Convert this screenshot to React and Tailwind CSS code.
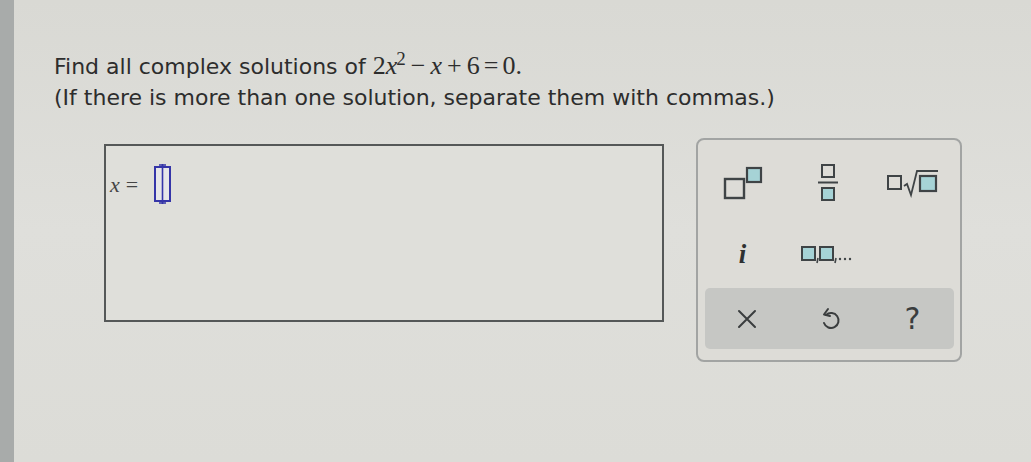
import React from "react";

const teal = "#a6d3d6";
const dark = "#3f4446";

function SupIcon() {
  return (
    <svg width="42" height="34" viewBox="0 0 42 34">
      <rect x="3" y="13" width="19" height="19" fill="none" stroke={dark} strokeWidth="2.4" />
      <rect x="25" y="2" width="14" height="14" fill={teal} stroke={dark} strokeWidth="2.2" />
    </svg>
  );
}

function FracIcon() {
  return (
    <svg width="26" height="40" viewBox="0 0 26 40">
      <rect x="7" y="2" width="12" height="12" fill="none" stroke={dark} strokeWidth="2" />
      <line x1="3" y1="19.5" x2="23" y2="19.5" stroke={dark} strokeWidth="2" />
      <rect x="7" y="25" width="12" height="12" fill={teal} stroke={dark} strokeWidth="2" />
    </svg>
  );
}

function SqrtIcon() {
  return (
    <svg width="54" height="30" viewBox="0 0 54 30">
      <rect x="2" y="8" width="13" height="13" fill="none" stroke={dark} strokeWidth="2" />
      <path d="M18 18 L21 16 L25 27 L31 3 L52 3" fill="none" stroke={dark} strokeWidth="1.8" />
      <rect x="34" y="8" width="16" height="15" fill={teal} stroke={dark} strokeWidth="2.2" />
    </svg>
  );
}

function ListIcon() {
  return (
    <svg width="56" height="22" viewBox="0 0 56 22">
      <rect x="2" y="4" width="13" height="13" fill={teal} stroke={dark} strokeWidth="2" />
      <path d="M18 15 L17 20" stroke={dark} strokeWidth="1.6" />
      <rect x="20" y="4" width="13" height="13" fill={teal} stroke={dark} strokeWidth="2" />
      <path d="M36 15 L35 20" stroke={dark} strokeWidth="1.6" />
      <circle cx="40" cy="16" r="1.2" fill={dark} />
      <circle cx="45" cy="16" r="1.2" fill={dark} />
      <circle cx="50" cy="16" r="1.2" fill={dark} />
    </svg>
  );
}

function XIcon() {
  return (
    <svg width="22" height="22" viewBox="0 0 22 22">
      <path d="M3 3 L19 19 M19 3 L3 19" stroke="#3a3d3e" strokeWidth="2" strokeLinecap="round" />
    </svg>
  );
}

function UndoIcon() {
  return (
    <svg width="22" height="24" viewBox="0 0 22 24">
      <path d="M7 8 A7.5 7.5 0 1 1 5 16" fill="none" stroke="#3a3d3e" strokeWidth="2" strokeLinecap="round" />
      <path d="M9 2 L5 7.5 L11 9" fill="none" stroke="#3a3d3e" strokeWidth="2" strokeLinecap="round" strokeLinejoin="round" />
    </svg>
  );
}

function Placeholder() {
  return (
    <svg width="22" height="42" viewBox="0 0 22 42">
      <rect x="3" y="4" width="15" height="34" fill="#e6e6e8" stroke="#3535a8" strokeWidth="2" />
      <line x1="10.5" y1="1" x2="10.5" y2="41" stroke="#3535a8" strokeWidth="1.6" />
      <path d="M7 2 L14 2 M7 40 L14 40" stroke="#3535a8" strokeWidth="1.4" />
    </svg>
  );
}

export default function App() {
  const sans = { fontFamily: "'DejaVu Sans', Verdana, sans-serif" };
  const serif = { fontFamily: "'Liberation Serif', 'Times New Roman', serif" };
  return (
    <div className="w-[1031px] h-[462px] flex overflow-hidden bg-[#dcdcd7]">
      <div className="w-[14px] shrink-0 bg-[#a8abaa]" />
      <div className="flex-1 bg-gradient-to-b from-[#d9d9d4] via-[#dfdfdb] to-[#dcdcd7] pl-[40px] pt-[50px]">
        <div className="text-[22px] leading-[31px] text-[#2d2d2d]" style={sans}>
          <p>
            Find all complex solutions of{" "}
            <span className="text-[26px]" style={serif}>
              2<i>x</i>
              <sup className="text-[19px] -ml-[1px]">2</sup>
              <span className="ml-[5px] mr-[5px]">−</span>
              <i>x</i>
              <span className="mx-[5px]">+</span>6<span className="mx-[4px]">=</span>0.
            </span>
          </p>
          <p>(If there is more than one solution, separate them with commas.)</p>
        </div>
        <div className="flex items-start mt-[25px]">
          <div className="ml-[50px] mt-[6px] w-[560px] h-[178px] border-2 border-[#555858] bg-[#dfdfda] flex items-start pt-[17px] pl-[4px]">
            <span className="text-[22px] text-[#444] italic mt-[5px]" style={serif}>x</span>
            <span className="text-[22px] text-[#444] ml-[6px] mt-[5px]" style={serif}>=</span>
            <span className="ml-[14px]">
              <Placeholder />
            </span>
          </div>
          <div className="ml-[32px] w-[266px] h-[224px] border-2 border-[#a2a4a3] rounded-[8px] bg-[#dddcd7] flex flex-col pl-[2px]">
            <div className="grid grid-cols-[85px_85px_85px] h-[80px] items-center justify-items-center pt-[6px]">
              <SupIcon />
              <FracIcon />
              <SqrtIcon />
            </div>
            <div className="grid grid-cols-[85px_85px_85px] h-[68px] items-center justify-items-center">
              <span className="text-[27px] italic font-bold text-[#2e3132]" style={serif}>i</span>
              <ListIcon />
              <span />
            </div>
            <div className="ml-[5px] w-[249px] h-[61px] rounded-[5px] bg-[#c6c7c4] grid grid-cols-3 items-center justify-items-center">
              <XIcon />
              <UndoIcon />
              <span className="text-[30px] leading-none text-[#3a3d3e]" style={sans}>?</span>
            </div>
          </div>
        </div>
      </div>
    </div>
  );
}
